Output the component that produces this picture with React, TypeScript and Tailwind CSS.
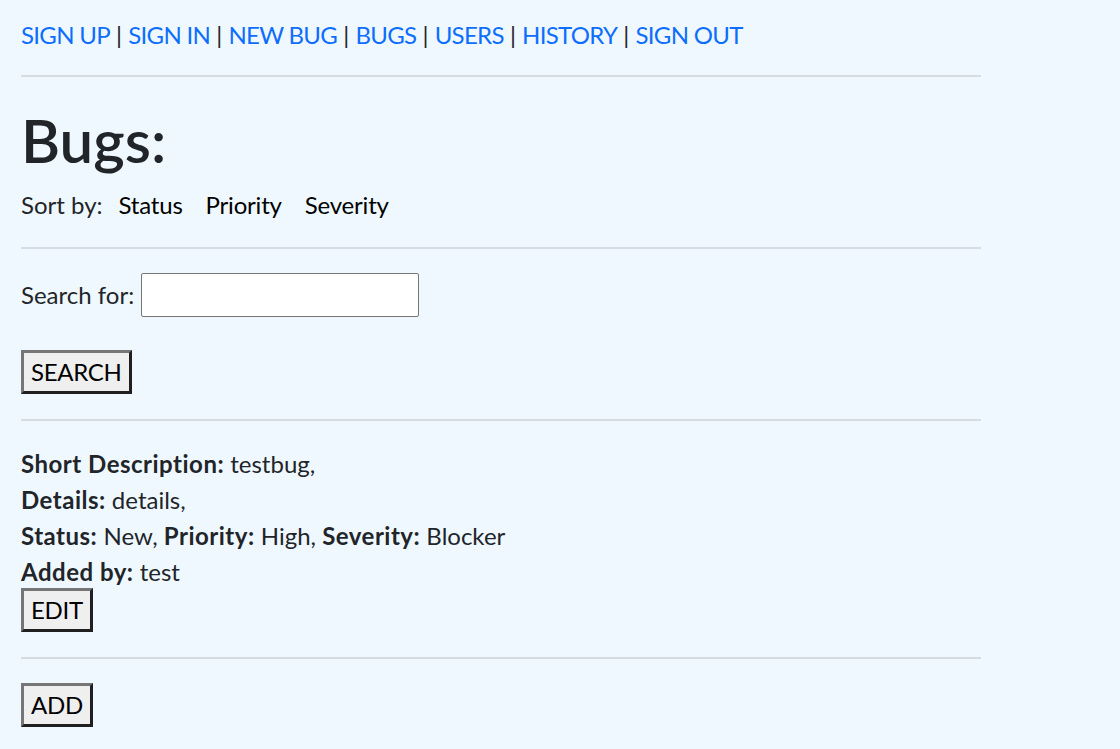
import React from "react";

const links = ["SIGN UP", "SIGN IN", "NEW BUG", "BUGS", "USERS", "HISTORY", "SIGN OUT"];

function OldButton({ children, className = "" }: { children: React.ReactNode; className?: string }) {
  return (
    <button
      className={
        "h-[44px] bg-[#efefef] border-[3px] border-t-[#767676] border-l-[#767676] border-b-[#1f1f1f] border-r-[#1f1f1f] px-[7px] tracking-[-0.3px] text-black leading-none " +
        className
      }
    >
      {children}
    </button>
  );
}

function Label({ children }: { children: React.ReactNode }) {
  return <b className="tracking-[0.5px]">{children}</b>;
}

export default function App() {
  return (
    <div className="min-h-screen bg-[#f0f8ff] text-[#212529] text-[24px] leading-[36px] font-['Lato','Noto_Sans',sans-serif]">
      <div className="w-[981px] pl-[21px] pt-[17px] pb-[22px]">
        <nav>
          {links.map((l, i) => (
            <span key={l}>
              {i > 0 && <span className="text-[#212529]"> | </span>}
              <a href="#" className="text-[#0d6efd] tracking-[-0.7px]">
                {l}
              </a>
            </span>
          ))}
        </nav>
        <hr className="mt-[22px] border-t-2 border-[#d6dce2]" />

        <h1 className="mt-[27px] text-[60px] leading-[72px] font-semibold">Bugs:</h1>
        <div className="mt-[11px] flex">
          <span>Sort by:</span>
          <div className="ml-[16px] flex gap-[23px] text-black tracking-[-0.2px]">
            <button>Status</button>
            <button>Priority</button>
            <button>Severity</button>
          </div>
        </div>
        <hr className="mt-[24px] border-t-2 border-[#d6dce2]" />

        <div className="mt-[24px] flex items-center">
          <label htmlFor="q">Search for:</label>
          <input
            id="q"
            className="ml-[7px] h-[44px] w-[278px] bg-white border border-[#767676] rounded-[2px]"
          />
        </div>
        <OldButton className="mt-[33px]">SEARCH</OldButton>
        <hr className="mt-[25px] border-t-2 border-[#d6dce2]" />

        <div className="mt-[25px]">
          <div>
            <Label>Short Description:</Label> testbug,
          </div>
          <div>
            <Label>Details:</Label> details,
          </div>
          <div>
            <Label>Status:</Label> New, <Label>Priority:</Label> High, <Label>Severity:</Label> Blocker
          </div>
          <div>
            <Label>Added by:</Label> test
          </div>
          <OldButton className="-mt-[2px]">EDIT</OldButton>
        </div>
        <hr className="mt-[25px] border-t-2 border-[#d6dce2]" />

        <OldButton className="mt-[24px]">ADD</OldButton>
      </div>
    </div>
  );
}
